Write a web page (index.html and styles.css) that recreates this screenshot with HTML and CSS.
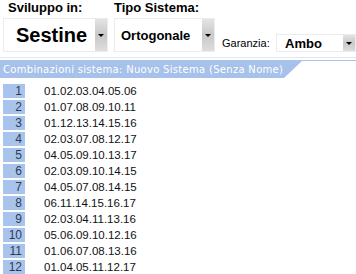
FILE: index.html
```html
<!DOCTYPE html>
<html lang="it">
  <head>
    <meta charset="utf-8" />
    <title>Combinazioni sistema</title>
    <link rel="stylesheet" href="styles.css">
  </head>

  <body>
    <div class="toolbar">
      <div class="field field-sviluppo">
        <label>Sviluppo in:</label>
        <div class="combo combo-big">
          <span class="value">Sestine</span>
          <span class="arrow"></span>
        </div>
      </div>
      <div class="field field-tipo">
        <label>Tipo Sistema:</label>
        <div class="combo combo-mid">
          <span class="value">Ortogonale</span>
          <span class="arrow"></span>
        </div>
      </div>
      <div class="field field-garanzia">
        <span class="inline-label">Garanzia:</span>
        <div class="combo combo-small">
          <span class="value">Ambo</span>
          <span class="arrow"></span>
        </div>
      </div>
    </div>

    <div class="rule"></div>
    <div class="tab-line">
      <div class="tab">Combinazioni sistema: Nuovo Sistema (Senza Nome)</div>
    </div>

    <ul class="combos">
      <li><span class="num">1</span><span class="seq">01.02.03.04.05.06</span></li>
      <li><span class="num">2</span><span class="seq">01.07.08.09.10.11</span></li>
      <li><span class="num">3</span><span class="seq">01.12.13.14.15.16</span></li>
      <li><span class="num">4</span><span class="seq">02.03.07.08.12.17</span></li>
      <li><span class="num">5</span><span class="seq">04.05.09.10.13.17</span></li>
      <li><span class="num">6</span><span class="seq">02.03.09.10.14.15</span></li>
      <li><span class="num">7</span><span class="seq">04.05.07.08.14.15</span></li>
      <li><span class="num">8</span><span class="seq">06.11.14.15.16.17</span></li>
      <li><span class="num">9</span><span class="seq">02.03.04.11.13.16</span></li>
      <li><span class="num">10</span><span class="seq">05.06.09.10.12.16</span></li>
      <li><span class="num">11</span><span class="seq">01.06.07.08.13.16</span></li>
      <li><span class="num">12</span><span class="seq">01.04.05.11.12.17</span></li>
    </ul>
  </body>
</html>
```

FILE: styles.css
```css
html {
  font-family: "Liberation Sans", Arial, sans-serif;
}

body {
  margin: 0;
  width: 356px;
  height: 274px;
  overflow: hidden;
  background: #fff;
  color: #000;
}

.toolbar {
  display: flex;
  align-items: flex-end;
  height: 52px;
}

.field {
  display: flex;
  flex-direction: column;
}

.field label {
  font-size: 13px;
  font-weight: bold;
  height: 18px;
  line-height: 16px;
}

.field-sviluppo {
  margin-left: 3px;
}

.field-sviluppo label {
  padding-left: 5px;
}

.field-tipo {
  margin-left: 6px;
}

.field-garanzia {
  flex-direction: row;
  align-items: center;
  margin-left: 7px;
}

.inline-label {
  font-size: 11px;
  width: 54px;
}

.combo {
  display: flex;
  align-items: stretch;
  border: 1px solid #ececec;
  box-sizing: border-box;
  background: #fff;
}

.combo .value {
  flex: 1;
  display: flex;
  align-items: center;
  font-weight: bold;
}

.combo .arrow {
  width: 12px;
  display: flex;
  align-items: center;
  justify-content: center;
  background: linear-gradient(#e4e4e4, #c8c8c8 50%, #dedede);
}

.combo .arrow::after {
  content: "";
  border-left: 3px solid transparent;
  border-right: 3px solid transparent;
  border-top: 3px solid #000;
}

.combo-big {
  width: 105px;
  height: 34px;
}

.combo-big .value {
  font-size: 20px;
  padding-left: 12px;
}

.combo-mid {
  width: 101px;
  height: 34px;
}

.combo-mid .value {
  font-size: 13px;
  padding-left: 6px;
}

.combo-small {
  width: 80px;
  height: 18px;
}

.combo-small .value {
  font-size: 13px;
  padding-left: 8px;
}

.rule {
  margin-top: 5px;
  height: 1px;
  background: #dde8f7;
}

.tab-line {
  margin-top: 2px;
  border-top: 1px solid #a9c3ea;
}

.tab {
  width: 302px;
  height: 17px;
  box-sizing: border-box;
  padding-left: 3px;
  background: #a6c1ea;
  clip-path: polygon(0 0, 100% 0, calc(100% - 18px) 100%, 0 100%);
  color: #fff;
  font-family: "DejaVu Sans", sans-serif;
  font-size: 10px;
  line-height: 17px;
  letter-spacing: 0.3px;
  white-space: nowrap;
}

.combos {
  list-style: none;
  margin: 6px 0 0;
  padding: 0;
}

.combos li {
  display: flex;
  align-items: center;
  height: 14px;
  margin-bottom: 2px;
  font-size: 12px;
}

.num {
  width: 19px;
  margin-left: 3px;
  padding-right: 3px;
  height: 14px;
  line-height: 14px;
  text-align: right;
  background: #a9c4ec;
  color: #2e3b55;
}

.seq {
  margin-left: 19px;
  font-size: 11.5px;
  color: #111;
}
```
